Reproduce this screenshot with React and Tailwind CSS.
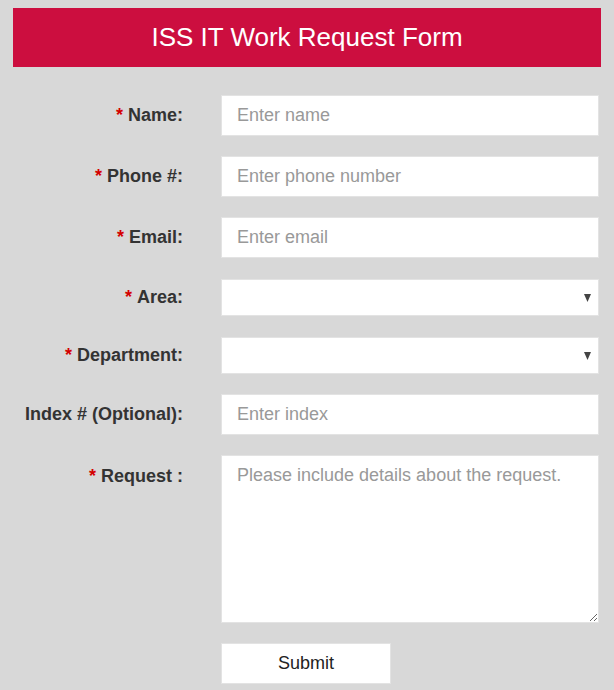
import React from 'react';

const font = { fontFamily: '"Liberation Sans", Arial, sans-serif' };

const Label = ({ text, required, top }) => (
  <label
    className={`w-[183px] shrink-0 text-right text-[18px] font-bold text-[#333] ${top ? 'pt-[8px]' : 'self-center'}`}
  >
    {required && <span className="text-[#d40000] mr-[5px]">*</span>}
    {text}
  </label>
);

const Row = ({ children, ...label }) => (
  <div className="flex items-start gap-[38px]">
    <Label {...label} />
    <div className="w-[378px]">{children}</div>
  </div>
);

const inputCls =
  'w-full bg-white border border-[#e3e3e3] px-[15px] text-[18px] text-[#333] placeholder:text-[#999] outline-none';

const Select = () => (
  <div className="relative mt-[1px]">
    <select className={`${inputCls} h-[37px] appearance-none`} defaultValue="">
      <option value=""></option>
    </select>
    <svg className="absolute right-[8px] top-[15px]" width="7" height="8" viewBox="0 0 7 8">
      <path d="M0 0H7L3.5 8Z" fill="#444" />
    </svg>
  </div>
);

export default function App() {
  return (
    <div className="min-h-[690px] bg-[#d8d8d8] pt-[8px]" style={font}>
      <div className="mx-[13px] h-[59px] bg-[#cc0e3f] flex items-center justify-center">
        <h1 className="text-white text-[26px] font-normal">ISS IT Work Request Form</h1>
      </div>
      <form className="mt-[28px] flex flex-col gap-5">
        <Row text="Name:" required>
          <input className={`${inputCls} h-[41px]`} placeholder="Enter name" />
        </Row>
        <Row text="Phone #:" required>
          <input className={`${inputCls} h-[41px]`} placeholder="Enter phone number" />
        </Row>
        <Row text="Email:" required>
          <input className={`${inputCls} h-[41px]`} placeholder="Enter email" />
        </Row>
        <Row text="Area:" required>
          <Select />
        </Row>
        <Row text="Department:" required>
          <Select />
        </Row>
        <Row text="Index # (Optional):">
          <input className={`${inputCls} h-[41px]`} placeholder="Enter index" />
        </Row>
        <Row text="Request :" required top>
          <textarea
            className={`${inputCls} h-[168px] block py-[8px] leading-[22px]`}
            placeholder="Please include details about the request."
          />
        </Row>
        <div className="flex gap-[38px]">
          <div className="w-[183px]" />
          <button
            type="button"
            className="w-[170px] h-[41px] bg-white border border-[#e3e3e3] text-[18px] text-[#222]"
          >
            Submit
          </button>
        </div>
      </form>
    </div>
  );
}
